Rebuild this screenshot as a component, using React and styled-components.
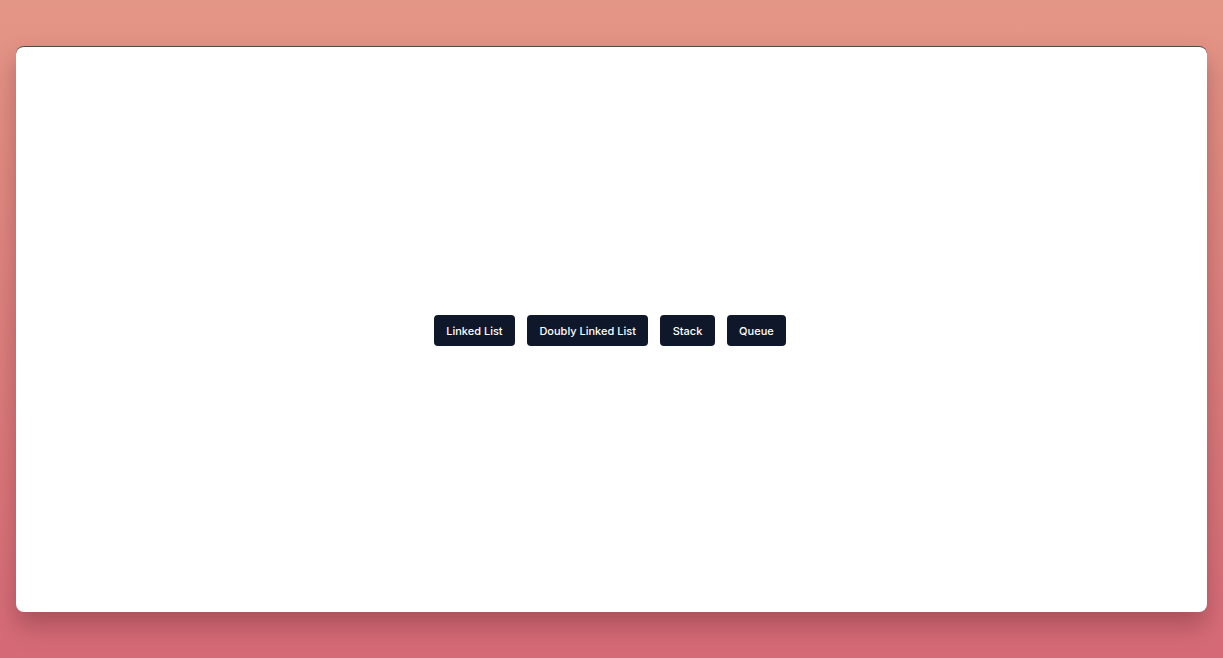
import React from "react";
import styled, { createGlobalStyle } from "styled-components";

const GlobalStyle = createGlobalStyle`
  html, body {
    margin: 0;
    padding: 0;
    height: 100%;
  }
  body {
    font-family: Inter, "Noto Sans", sans-serif;
    background: linear-gradient(180deg, #e49686 0%, #d56a76 100%);
    min-height: 100vh;
  }
`;

const Page = styled.div`
  box-sizing: border-box;
  height: 100vh;
  padding: 46px 16px;
  display: flex;
`;

const Card = styled.main`
  flex: 1;
  background: #ffffff;
  border-top: 1px solid #4a4a4a;
  border-radius: 8px;
  box-shadow: 0 14px 24px rgba(90, 30, 40, 0.35);
  display: flex;
  align-items: center;
  justify-content: center;
`;

const Menu = styled.nav`
  display: flex;
  gap: 12px;
  margin: 2px 3px 0 0;
`;

const Button = styled.button`
  height: 31px;
  padding: 0 12.4px;
  border: none;
  border-radius: 4px;
  background: #0f172a;
  color: #ffffff;
  font-family: Inter, "Noto Sans", sans-serif;
  font-size: 11px;
  font-weight: 500;
  cursor: pointer;
`;

const items = ["Linked List", "Doubly Linked List", "Stack", "Queue"];

export default function App() {
  return (
    <>
      <GlobalStyle />
      <Page>
        <Card>
          <Menu>
            {items.map((label) => (
              <Button key={label}>{label}</Button>
            ))}
          </Menu>
        </Card>
      </Page>
    </>
  );
}
